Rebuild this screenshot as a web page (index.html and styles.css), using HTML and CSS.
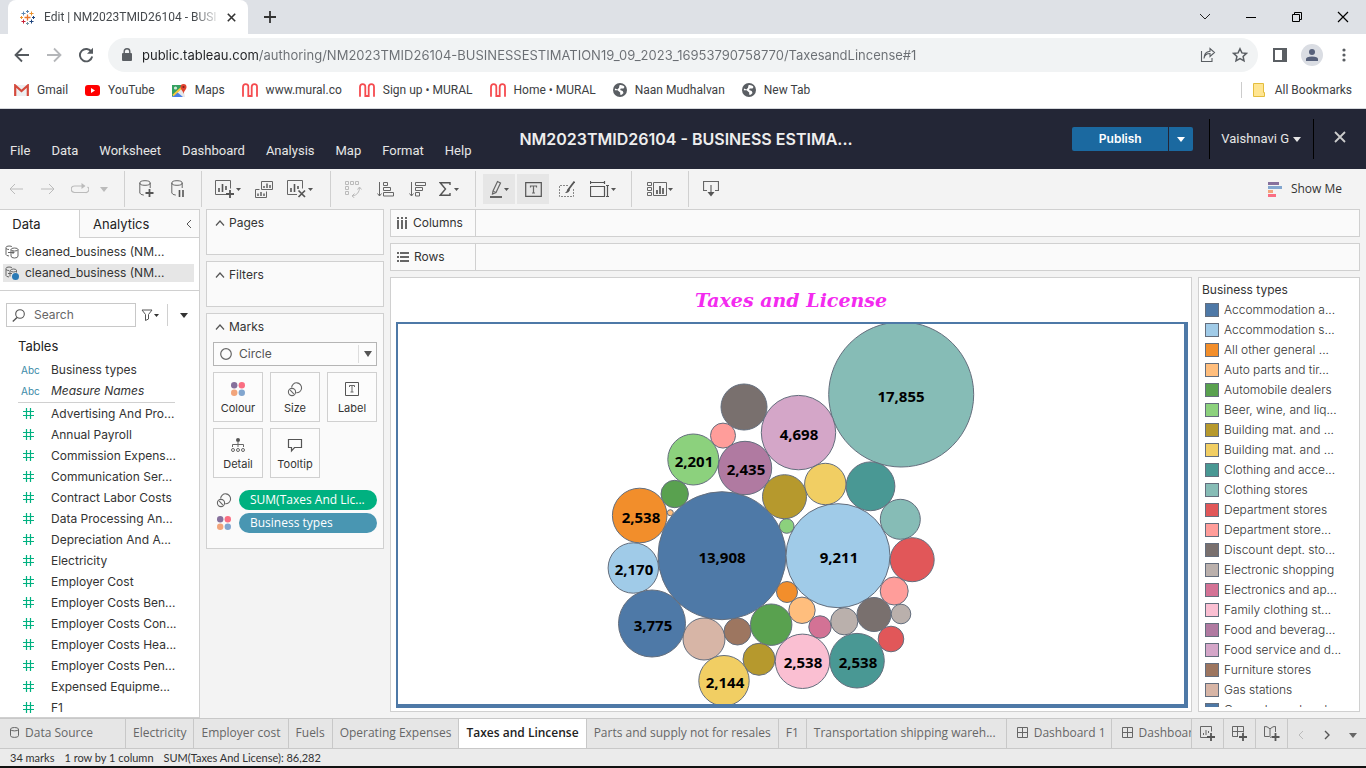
FILE: index.html
```html
<!DOCTYPE html>
<html lang="en">
<head>
<meta charset="utf-8">
<title>Edit | NM2023TMID26104 - BUSINESS ESTIMATION</title>
<link rel="stylesheet" href="styles.css">
</head>
<body>
<svg class="sprite" aria-hidden="true">
  <symbol id="hash" viewBox="0 0 11 11"><path d="M3.5 0v11M7.5 0v11M0 3.5h11M0 7.5h11" fill="none" stroke="#00b180" stroke-width="1.2"/></symbol>
  <symbol id="caret" viewBox="0 0 8 5"><path d="M0 0h8L4 5z" fill="currentColor"/></symbol>
  <symbol id="caret-s" viewBox="0 0 5 3"><path d="M0 0h5L2.5 3z" fill="currentColor"/></symbol>
  <symbol id="chev-up" viewBox="0 0 10 6"><path d="M1 5.5l4-4.5 4 4.5" fill="none" stroke="#555" stroke-width="1.2"/></symbol>
  <symbol id="size" viewBox="0 0 16 16"><g fill="none" stroke="#666" stroke-width="1.1"><path d="M4.600 6.500a5 5 0 1 1 4.600 5.300"/><circle cx="5" cy="11" r="3.600"/><path d="M3.200 9.200l3.600 3.600"/></g></symbol>
  <symbol id="colour" viewBox="0 0 14 14"><circle cx="3.2" cy="3.2" r="3.2" fill="#86709c"/><circle cx="10.8" cy="3.2" r="3.2" fill="#fa6e82"/><circle cx="3.2" cy="10.8" r="3.2" fill="#f2a57c"/><circle cx="10.8" cy="10.8" r="3.2" fill="#82a6cf"/></symbol>
  <symbol id="mural" viewBox="0 0 16 14"><path d="M1 13.800V4Q1 1.100 3.700 1.100T6.300 4v9h3.400V4q0-2.900 2.700-2.900T15 4v9.800" fill="none" stroke="#f54b4f" stroke-width="1.800"/></symbol>
  <symbol id="globe" viewBox="0 0 14 14"><circle cx="7" cy="7" r="7" fill="#5a5e63"/><path d="M6.500 2.200c1.800-.5 3.800.2 5 1.800l-1 1.600-2.800-.2-.6 1.600 2.600 1 .8 2-1.700 1.800H7.200V9.500L4.600 7.200H1.800L2 5.600l2.400.8L6 4.800z" fill="#fff"/></symbol>
  <symbol id="dash" viewBox="0 0 11 11"><path d="M.5.5h10v10H.5zM.5 5.500h10M5.500.5v10" fill="none" stroke="#666"/></symbol>
</svg>

<header class="browser">
  <div class="tabstrip">
    <div class="tab">
      <svg width="15" height="15" viewBox="0 0 15 15" fill="none"><path d="M7.500 4.500v6M4.500 7.500h6" stroke="#e8762d" stroke-width="1.300"/><path d="M3.500 1.500v4M1.500 3.500h4M7.500 0v3M6 1.500h3" stroke="#5c87b2"/><path d="M11.500 1.500v4M9.500 3.500h4M1.500 6v3M0 7.500h3" stroke="#eb912c"/><path d="M13.500 6v3M12 7.500h3M11.500 9.500v4M9.500 11.500h4" stroke="#1f457e"/><path d="M3.500 9.500v4M1.500 11.500h4" stroke="#c72035"/><path d="M7.500 12v3M6 13.500h3" stroke="#7199a6"/></svg>
      <span class="tab-title">Edit | NM2023TMID26104 - BUSI</span>
      <button class="plain" aria-label="Close tab"><svg width="9" height="9" viewBox="0 0 9 9"><path d="M.8.8l7.400 7.400M8.200.8L.8 8.200" stroke="#333" stroke-width="1.600"/></svg></button>
    </div>
    <button class="plain new-tab" aria-label="New tab"><svg width="12" height="12" viewBox="0 0 12 12"><path d="M6 0v12M0 6h12" stroke="#333" stroke-width="1.800"/></svg></button>
    <div class="window-controls">
      <button class="plain" aria-label="Search tabs"><svg width="12" height="12" viewBox="0 0 12 12"><path d="M1 3l5 5 5-5" fill="none" stroke="#222"/></svg></button>
      <button class="plain" aria-label="Minimize"><svg width="12" height="12" viewBox="0 0 12 12"><path d="M1 6.500h10" stroke="#000"/></svg></button>
      <button class="plain" aria-label="Restore"><svg width="12" height="12" viewBox="0 0 12 12"><path d="M1.500 3.500h7v7h-7zM3.500 3.500v-2h7v7h-2" fill="none" stroke="#000"/></svg></button>
      <button class="plain" aria-label="Close"><svg width="12" height="12" viewBox="0 0 12 12"><path d="M1 1l10 10M11 1L1 11" stroke="#000" stroke-width="1.200"/></svg></button>
    </div>
  </div>

  <div class="navbar">
    <button class="plain" aria-label="Back"><svg width="16" height="16" viewBox="0 0 16 16"><path d="M15 8H2M8 1.500L1.500 8 8 14.500" fill="none" stroke="#555a5f" stroke-width="1.800"/></svg></button>
    <button class="plain" aria-label="Forward"><svg width="16" height="16" viewBox="0 0 16 16"><path d="M1 8h13M8 1.500L14.500 8 8 14.500" fill="none" stroke="#b5b7ba" stroke-width="1.800"/></svg></button>
    <button class="plain" aria-label="Reload"><svg width="16" height="16" viewBox="0 0 16 16"><path d="M13.500 5A6.200 6.200 0 1 0 14.200 9.500" fill="none" stroke="#555a5f" stroke-width="1.900"/><path d="M15 .8v6H9z" fill="#555a5f"/></svg></button>
    <div class="address">
      <svg width="10" height="14" viewBox="0 0 10 14"><path d="M1 5h8a1 1 0 0 1 1 1v6a1 1 0 0 1-1 1H1a1 1 0 0 1-1-1V6a1 1 0 0 1 1-1z" fill="#5a5e63"/><path d="M2.200 6V3.500a2.800 2.800 0 0 1 5.600 0V6" fill="none" stroke="#5a5e63" stroke-width="1.400"/></svg>
      <input class="url" type="text" aria-label="Address" value="public.tableau.com/authoring/NM2023TMID26104-BUSINESSESTIMATION19_09_2023_16953790758770/TaxesandLincense#1">
      <button class="plain" aria-label="Share"><svg width="16" height="16" viewBox="0 0 16 16"><path d="M1.500 4v10.500H12V11M4 11.500c.5-3.500 2.500-5 6-5V9.500l4.500-4-4.500-4v2.800C6 4.800 4 7 4 11.500z" fill="none" stroke="#5a5e63" stroke-width="1.100"/></svg></button>
      <button class="plain" aria-label="Bookmark this page"><svg width="16" height="16" viewBox="0 0 16 16"><path d="M8 1.800l1.900 4.100 4.500.5-3.300 3 .9 4.400L8 11.600l-4 2.200.9-4.400-3.300-3 4.500-.5z" fill="none" stroke="#5a5e63" stroke-width="1.500"/></svg></button>
    </div>
    <div class="nav-right">
      <button class="plain" aria-label="Side panel"><svg width="14" height="14" viewBox="0 0 14 14"><path d="M1 1h12v12H1z" fill="none" stroke="#5a5e63" stroke-width="2"/><path d="M9 0h5v14H9z" fill="#5a5e63"/></svg></button>
      <button class="plain" aria-label="Profile"><svg width="22" height="22" viewBox="0 0 22 22"><circle cx="11" cy="11" r="11" fill="#dadde3"/><circle cx="11" cy="8" r="3" fill="#56607a"/><path d="M5 17v-2q0-2.600 6-2.600t6 2.600v2z" fill="#56607a"/></svg></button>
      <button class="plain" aria-label="Menu"><svg width="4" height="14" viewBox="0 0 4 14" fill="#5a5e63"><circle cx="2" cy="2" r="1.600"/><circle cx="2" cy="7" r="1.600"/><circle cx="2" cy="12" r="1.600"/></svg></button>
    </div>
  </div>

  <nav class="bookmarks">
    <a href="#"><svg width="15" height="12" viewBox="0 0 15 12"><path d="M0 1h15v11H0z" fill="#eceff1"/><path d="M1.200 12V1.500l6.300 5.500 6.300-5.500V12" fill="none" stroke="#d54b3d" stroke-width="2.200"/></svg>Gmail</a>
    <a href="#"><svg width="15" height="11" viewBox="0 0 15 11"><rect width="15" height="11" rx="3" fill="#f00"/><path d="M6 3l4 2.500L6 8z" fill="#fff"/></svg>YouTube</a>
    <a href="#"><svg width="15" height="15" viewBox="0 0 15 15"><path d="M0 2h12v12H0z" fill="#34a060"/><path d="M0 14L11 4l2 10z" fill="#e6e8ea"/><path d="M0 14l5-5 6 5z" fill="#4a80e8"/><path d="M1 12.500L11.500 3" stroke="#f8c93a" stroke-width="1.800"/><circle cx="3.500" cy="5" r="1.600" fill="#cfe8d8"/><path d="M11.500 11C11 7.500 8.500 7 8.500 4a3 3 0 0 1 6 0c0 3-2.500 3.500-3 7z" fill="#e0432f"/><circle cx="11.500" cy="4" r="1.100" fill="#7b231a"/></svg>Maps</a>
    <a href="#"><svg width="16" height="14"><use href="#mural"/></svg>www.mural.co</a>
    <a href="#"><svg width="16" height="14"><use href="#mural"/></svg>Sign up • MURAL</a>
    <a href="#"><svg width="16" height="14"><use href="#mural"/></svg>Home • MURAL</a>
    <a href="#"><svg width="14" height="14"><use href="#globe"/></svg>Naan Mudhalvan</a>
    <a href="#"><svg width="14" height="14"><use href="#globe"/></svg>New Tab</a>
    <a href="#" class="all"><svg width="12" height="14" viewBox="0 0 12 14"><path d="M.5.500h10v9h1v4H.5z" fill="#ffe591" stroke="#e3bd3e"/></svg>All Bookmarks</a>
  </nav>
</header>

<div class="app-header">
  <nav class="menu">
    <button class="plain">File</button><button class="plain">Data</button><button class="plain">Worksheet</button><button class="plain">Dashboard</button><button class="plain">Analysis</button><button class="plain">Map</button><button class="plain">Format</button><button class="plain">Help</button>
  </nav>
  <h1>NM2023TMID26104 - BUSINESS ESTIMA...</h1>
  <div class="account">
    <div class="publish"><button>Publish</button><button aria-label="Publish options"><svg width="8" height="5"><use href="#caret"/></svg></button></div>
    <button class="plain user">Vaishnavi G<svg width="8" height="5"><use href="#caret"/></svg></button>
    <button class="plain close" aria-label="Close workbook"><svg width="12" height="12" viewBox="0 0 12 12"><path d="M1 1l10 10M11 1L1 11" stroke="#ccc" stroke-width="1.800"/></svg></button>
  </div>
</div>

<div class="toolbar">
  <div class="group g1">
    <button class="plain" aria-label="Undo"><svg width="14" height="12" viewBox="0 0 14 12"><path d="M14 6H1M6 1L1 6l5 5" fill="none" stroke="#bbb"/></svg></button>
    <button class="plain" aria-label="Redo"><svg width="14" height="12" viewBox="0 0 14 12"><path d="M0 6h13M8 1l5 5-5 5" fill="none" stroke="#bbb"/></svg></button>
    <button class="plain" aria-label="Replay"><svg width="18" height="12" viewBox="0 0 18 12"><path d="M13 3h-9.500a3 3 0 0 0 0 6.500h11a3 3 0 0 0 2-5.500" fill="none" stroke="#bbb" stroke-width="1.200"/><path d="M10.500 0v6l4-3z" fill="#bbb"/></svg></button>
    <button class="plain narrow dim" aria-label="Replay options"><svg width="8" height="5"><use href="#caret"/></svg></button>
  </div>
  <div class="group g2">
    <button class="plain" aria-label="New data source"><svg width="15" height="18" viewBox="0 0 15 18"><g fill="none" stroke="#666"><ellipse cx="6" cy="3" rx="5.200" ry="2.300"/><path d="M.8 3v10q.5 1.800 4 2.100M11.200 3v5"/></g><path d="M10.500 9v8M6.500 13h8" stroke="#555" stroke-width="1.800"/></svg></button>
    <button class="plain" aria-label="Pause updates"><svg width="15" height="18" viewBox="0 0 15 18"><g fill="none" stroke="#666"><ellipse cx="6" cy="3" rx="5.200" ry="2.300"/><path d="M.8 3v10q.5 1.800 4 2.100M11.200 3v5"/></g><path d="M8.500 10v7M12 10v7" stroke="#555" stroke-width="1.600"/></svg></button>
  </div>
  <div class="group g3">
    <button class="plain wide" aria-label="New worksheet"><svg width="20" height="18" viewBox="0 0 20 18"><path d="M11 14.500H.5V.5h15v8" fill="none" stroke="#666"/><path d="M4 12V8M7.500 12V4M11 10V6" stroke="#555" stroke-width="1.600"/><path d="M15 10v8M11 14h8" stroke="#555" stroke-width="1.800"/></svg><svg width="5" height="3"><use href="#caret-s"/></svg></button>
    <button class="plain wide" aria-label="Duplicate"><svg width="18" height="17" viewBox="0 0 18 17"><path d="M6.500.5h11v8h-11zM4.500 8.500h-4v8h11v-6" fill="none" stroke="#666"/><path d="M9 7V5M12 7V2.500M15 7V4M3 15v-2.500M6 15v-4M9 15v-2.500" stroke="#555" stroke-width="1.400"/></svg></button>
    <button class="plain wide" aria-label="Clear sheet"><svg width="20" height="18" viewBox="0 0 20 18"><path d="M10 14.500H.5V.5h15v8" fill="none" stroke="#666"/><path d="M4 12V8M7.500 12V4M11 9V6" stroke="#555" stroke-width="1.600"/><path d="M11.500 10.500l6.500 6.500M18 10.500L11.500 17" stroke="#555" stroke-width="1.700"/></svg><svg width="5" height="3"><use href="#caret-s"/></svg></button>
  </div>
  <div class="group g4">
    <button class="plain" aria-label="Swap"><svg width="17" height="17" viewBox="0 0 17 17" fill="none" stroke="#bbb"><path d="M.5.5h3v3h-3zM5.500.5h3v3h-3zM10.500.5h3v3h-3zM.5 5.500h3v3h-3zM.5 10.500h3v3h-3zM14.500 6.500q0 7-7 8.500M12.500 8.500l2-2.500 2 2.500M9.500 12.500L7 15l2.500 2"/></svg></button>
    <button class="plain" aria-label="Sort ascending"><svg width="17" height="15" viewBox="0 0 17 15" fill="none" stroke="#666"><path d="M2.500 0v14M.5 11.500l2 2.500 2-2.500M6.500.5h4v3h-4zM6.500 5.500h7v3h-7zM6.500 10.500h10v3.500h-10z"/></svg></button>
    <button class="plain" aria-label="Sort descending"><svg width="17" height="15" viewBox="0 0 17 15" fill="none" stroke="#666"><path d="M2.500 0v14M.5 11.500l2 2.500 2-2.500M6.500.5h10v3h-10zM6.500 5.500h7v3h-7zM6.500 10.500h4v3.500h-4z"/></svg></button>
    <button class="plain sum" aria-label="Totals"><svg width="12" height="14" viewBox="0 0 12 14"><path d="M11 3V.8H1.200L6.500 7l-5.300 6.200H11V11" fill="none" stroke="#555" stroke-width="1.400"/></svg><svg width="5" height="3"><use href="#caret-s"/></svg></button>
  </div>
  <div class="group g5">
    <button class="plain on" aria-label="Highlight"><svg width="13" height="18" viewBox="0 0 13 18"><path d="M3 11L7.500 1.500l3 1.500L6 12.500l-3.500 1.500z" fill="none" stroke="#666" stroke-width="1.200"/><path d="M3 11l3 1.500" stroke="#666"/><path d="M0 17h12" stroke="#555" stroke-width="1.800"/></svg><svg width="5" height="3"><use href="#caret-s"/></svg></button>
    <button class="plain on" aria-label="Show mark labels"><svg width="17" height="15" viewBox="0 0 17 15"><path d="M.7.7h15.600v13.600H.7z" fill="none" stroke="#555" stroke-width="1.200"/><path d="M5.500 5.500V4h6v1.500M8.500 4v7M7 11h3" fill="none" stroke="#666" stroke-width="1.200"/></svg></button>
    <button class="plain" aria-label="Format"><svg width="16" height="17" viewBox="0 0 16 17"><path d="M9 4.500H.5v11h14V8" fill="none" stroke="#888" stroke-dasharray="2 1"/><path d="M15.500.5L9 9" stroke="#555" stroke-width="1.800"/><path d="M10 7.500q-2 .5-2.500 3L6 12q3.500.5 5-3z" fill="#555"/></svg></button>
    <button class="plain wide" aria-label="Fit"><svg width="20" height="17" viewBox="0 0 20 17"><path d="M.5 5.500h14v10H.5zM.5 0v3M14.500 0v3M.5 1.500h14M17.500 4.500v11M16 4.500h3M16 15.500h3" fill="none" stroke="#555" stroke-width="1.200"/></svg><svg width="5" height="3"><use href="#caret-s"/></svg></button>
  </div>
  <div class="group g6">
    <button class="plain" aria-label="Show or hide cards"><svg width="20" height="14" viewBox="0 0 20 14"><path d="M.5.5h4v3h-4zM.5 5.500h4v3h-4zM.5 10.500h4v3h-4zM6.500.5h13v13h-13z" fill="none" stroke="#666"/><path d="M10 12V8M13 12V4M16 12V6" stroke="#555" stroke-width="1.700"/></svg><svg width="5" height="3"><use href="#caret-s"/></svg></button>
  </div>
  <div class="group g7">
    <button class="plain" aria-label="Download"><svg width="16" height="16" viewBox="0 0 16 16"><path d="M4 9.500H.5v-9h15v9H12M8 4v10" fill="none" stroke="#666" stroke-width="1.200"/><path d="M4.500 11h7L8 15.500z" fill="#555"/></svg></button>
  </div>
  <button class="plain show-me"><svg width="14" height="15" viewBox="0 0 14 15"><path d="M0 0h11v3H0z" fill="#86709c"/><path d="M0 4h14v3H0z" fill="#82a6cf"/><path d="M0 8h5v3H0z" fill="#f2a57c"/><path d="M0 12h8v3H0z" fill="#fa6e82"/></svg>Show Me</button>
</div>

<main class="workspace">
  <aside class="data-pane">
    <div class="pane-tabs">
      <button class="plain current">Data</button>
      <button class="plain other">Analytics<svg width="6" height="10" viewBox="0 0 6 10"><path d="M5 1L1 5l4 4" fill="none" stroke="#555"/></svg></button>
    </div>
    <div class="sources">
      <a href="#"><svg width="14" height="14" viewBox="0 0 14 14" fill="none" stroke="#666"><path d="M4 11q-3-.5-3-1.500v-7Q1 1 4 1t3 1M1 3.500q1 1 3 1"/><ellipse cx="9.500" cy="4.500" rx="3.500" ry="1.500"/><path d="M6 4.500v6.500q0 2 3.500 2t3.500-2V4.500M3 7.500h6M7.500 6L9 7.500 7.500 9"/></svg>cleaned_business (NM...</a>
      <a href="#" class="selected"><svg width="14" height="14" viewBox="0 0 14 14" fill="none" stroke="#666"><path d="M4 11q-3-.5-3-1.500v-7Q1 1 4 1t3 1M1 3.500q1 1 3 1"/><ellipse cx="8.500" cy="4.500" rx="3" ry="1.500"/><path d="M5 4.500v6M11.500 4.500v2M3 7.500h4"/><circle cx="10.500" cy="10.500" r="3.500" fill="#2a7ab5" stroke="none"/></svg>cleaned_business (NM...</a>
    </div>
    <div class="search-row">
      <label class="search"><svg width="13" height="13" viewBox="0 0 13 13"><circle cx="8" cy="5" r="4.300" fill="none" stroke="#555" stroke-width="1.100"/><path d="M5 8.500L.8 12.500" stroke="#555" stroke-width="1.400"/></svg><input type="text" placeholder="Search" aria-label="Search"></label>
      <button class="plain filter" aria-label="Filter"><svg width="12" height="12" viewBox="0 0 12 12"><path d="M1 1h10L7.500 5.500V10l-3 1.500v-6z" fill="none" stroke="#555"/></svg><svg width="5" height="3"><use href="#caret-s"/></svg></button>
      <button class="plain more" aria-label="More"><svg width="8" height="5"><use href="#caret"/></svg></button>
    </div>
    <h2>Tables</h2>
    <ul class="fields dims">
      <li><span class="abc">Abc</span>Business types</li>
      <li class="italic"><span class="abc">Abc</span>Measure Names</li>
    </ul>
    <ul class="fields measures">
      <li><svg><use href="#hash"/></svg>Advertising And Pro...</li>
      <li><svg><use href="#hash"/></svg>Annual Payroll</li>
      <li><svg><use href="#hash"/></svg>Commission Expens...</li>
      <li><svg><use href="#hash"/></svg>Communication Ser...</li>
      <li><svg><use href="#hash"/></svg>Contract Labor Costs</li>
      <li><svg><use href="#hash"/></svg>Data Processing An...</li>
      <li><svg><use href="#hash"/></svg>Depreciation And A...</li>
      <li><svg><use href="#hash"/></svg>Electricity</li>
      <li><svg><use href="#hash"/></svg>Employer Cost</li>
      <li><svg><use href="#hash"/></svg>Employer Costs Ben...</li>
      <li><svg><use href="#hash"/></svg>Employer Costs Con...</li>
      <li><svg><use href="#hash"/></svg>Employer Costs Hea...</li>
      <li><svg><use href="#hash"/></svg>Employer Costs Pen...</li>
      <li><svg><use href="#hash"/></svg>Expensed Equipme...</li>
      <li><svg><use href="#hash"/></svg>F1</li>
    </ul>
  </aside>

  <section class="cards">
    <div class="card"><h3><svg width="10" height="6"><use href="#chev-up"/></svg>Pages</h3></div>
    <div class="card"><h3><svg width="10" height="6"><use href="#chev-up"/></svg>Filters</h3></div>
    <div class="card marks">
      <h3><svg width="10" height="6"><use href="#chev-up"/></svg>Marks</h3>
      <div class="mark-type">
        <svg width="12" height="12" viewBox="0 0 12 12"><circle cx="6" cy="6" r="5.300" fill="none" stroke="#666" stroke-width="1.200"/></svg>
        <select aria-label="Mark type"><option>Circle</option></select>
        <span class="drop"><svg width="8" height="6" viewBox="0 0 8 6"><path d="M0 0h8L4 6z" fill="#555"/></svg></span>
      </div>
      <div class="mark-buttons">
        <button><svg width="16" height="16" viewBox="0 0 16 16"><use href="#colour" x="1" y="1" width="14" height="14"/></svg>Colour</button>
        <button><svg width="16" height="16"><use href="#size"/></svg>Size</button>
        <button><svg width="16" height="16" viewBox="0 0 16 16"><path d="M1.500 1.500h13v13h-13z" fill="none" stroke="#555"/><path d="M5.500 6V4.500h5V6M8 4.500V11M6.500 11h3" fill="none" stroke="#666"/></svg>Label</button>
        <button><svg width="16" height="16" viewBox="0 0 16 16"><circle cx="8" cy="3" r="2" fill="#555"/><path d="M8 5v5M2.500 10V7.500h11V10" fill="none" stroke="#666"/><g fill="none" stroke="#666"><circle cx="3" cy="13" r="1.500"/><circle cx="8" cy="13" r="1.500"/><circle cx="13" cy="13" r="1.500"/></g></svg>Detail</button>
        <button><svg width="16" height="16" viewBox="0 0 16 16"><path d="M1.500 2.500h13v8H7.500l-3 3.500v-3.500h-3z" fill="none" stroke="#555" stroke-width="1.200"/></svg>Tooltip</button>
      </div>
      <div class="pill-row"><svg width="16" height="16"><use href="#size"/></svg><button class="pill green">SUM(Taxes And Lic...</button></div>
      <div class="pill-row"><svg width="14" height="14"><use href="#colour"/></svg><button class="pill blue">Business types</button></div>
    </div>
  </section>

  <section class="sheet">
    <div class="shelf"><span><svg width="11" height="12" viewBox="0 0 11 12" fill="#666"><path d="M0 0h2v2H0zM4 0h2v2H4zM8 0h2v2H8zM0 3h2v9H0zM4 3h2v9H4zM8 3h2v9H8z"/></svg>Columns</span></div>
    <div class="shelf"><span><svg width="12" height="10" viewBox="0 0 12 10" fill="#666"><path d="M0 0h2v2H0zM0 4h2v2H0zM0 8h2v2H0zM3 0h9v2H3zM3 4h9v2H3zM3 8h9v2H3z"/></svg>Rows</span></div>
    <div class="view-row">
      <div class="view">
        <h2>Taxes and License</h2>
        <div class="viz">
          <svg viewBox="0 0 786 380" role="img" aria-label="Packed bubbles of taxes and license by business type">
            <g stroke="#646e7d" stroke-width="1">
              <circle cx="503.200" cy="70.500" r="72.500" fill="#86bcb6"/><circle cx="324" cy="231.700" r="64" fill="#4e79a7"/><circle cx="440" cy="231.700" r="52" fill="#a0cbe8"/>
              <circle cx="400.500" cy="108.600" r="37.200" fill="#d4a6c8"/><circle cx="346" cy="83" r="23" fill="#79706e"/><circle cx="325" cy="111.600" r="12.500" fill="#ff9d9a"/>
              <circle cx="295.300" cy="135.500" r="25.500" fill="#8cd17d"/><circle cx="347" cy="144" r="26.700" fill="#b07aa1"/><circle cx="276.700" cy="170" r="13.700" fill="#59a14f"/>
              <circle cx="241.700" cy="191.500" r="27.300" fill="#f28e2b"/><circle cx="272.300" cy="188.700" r="3" fill="#ffbe7d"/><circle cx="235.300" cy="244" r="25.200" fill="#a0cbe8"/>
              <circle cx="254" cy="299.500" r="33.500" fill="#4e79a7"/><circle cx="306" cy="315" r="21" fill="#d7b5a6"/><circle cx="339.500" cy="307.500" r="13.500" fill="#9d7660"/>
              <circle cx="373.200" cy="300.700" r="20.700" fill="#59a14f"/><circle cx="326" cy="356.700" r="25.200" fill="#f1ce63"/><circle cx="361" cy="335.300" r="16" fill="#b6992d"/>
              <circle cx="404.500" cy="337.300" r="27.200" fill="#fabfd2"/><circle cx="459" cy="336.700" r="27.300" fill="#499894"/><circle cx="389" cy="268" r="10.500" fill="#f28e2b"/>
              <circle cx="404" cy="286.300" r="13.200" fill="#ffbe7d"/><circle cx="422" cy="303" r="11.200" fill="#d37295"/><circle cx="446.300" cy="297.300" r="13.600" fill="#bab0ac"/>
              <circle cx="476" cy="290.500" r="17" fill="#79706e"/><circle cx="503" cy="290" r="9.800" fill="#bab0ac"/><circle cx="493" cy="315" r="12.800" fill="#e15759"/>
              <circle cx="496.200" cy="267" r="14" fill="#ff9d9a"/><circle cx="514.200" cy="235.700" r="22" fill="#e15759"/><circle cx="502.300" cy="195.300" r="20" fill="#86bcb6"/>
              <circle cx="472.500" cy="162.300" r="24.400" fill="#499894"/><circle cx="427.300" cy="160" r="20.700" fill="#f1ce63"/><circle cx="386.500" cy="172.700" r="22" fill="#b6992d"/>
              <circle cx="388.700" cy="202" r="7.300" fill="#8cd17d"/>
            </g>
            <g class="values">
              <text x="503" y="78">17,855</text><text x="324" y="239">13,908</text><text x="441" y="239">9,211</text><text x="401" y="116">4,698</text>
              <text x="296" y="143">2,201</text><text x="348" y="151">2,435</text><text x="243" y="199">2,538</text><text x="236" y="251">2,170</text>
              <text x="255" y="307">3,775</text><text x="327" y="364">2,144</text><text x="405" y="344">2,538</text><text x="460" y="344">2,538</text>
            </g>
          </svg>
        </div>
      </div>
      <aside class="legend">
        <h3>Business types</h3>
        <ul>
          <li><i class="c1"></i>Accommodation a...</li>
          <li><i class="c2"></i>Accommodation s...</li>
          <li><i class="c3"></i>All other general ...</li>
          <li><i class="c4"></i>Auto parts and tir...</li>
          <li><i class="c5"></i>Automobile dealers</li>
          <li><i class="c6"></i>Beer, wine, and liq...</li>
          <li><i class="c7"></i>Building mat. and ...</li>
          <li><i class="c8"></i>Building mat. and ...</li>
          <li><i class="c9"></i>Clothing and acce...</li>
          <li><i class="c10"></i>Clothing stores</li>
          <li><i class="c11"></i>Department stores</li>
          <li><i class="c12"></i>Department store...</li>
          <li><i class="c13"></i>Discount dept. sto...</li>
          <li><i class="c14"></i>Electronic shopping</li>
          <li><i class="c15"></i>Electronics and ap...</li>
          <li><i class="c16"></i>Family clothing st...</li>
          <li><i class="c17"></i>Food and beverag...</li>
          <li><i class="c18"></i>Food service and d...</li>
          <li><i class="c19"></i>Furniture stores</li>
          <li><i class="c20"></i>Gas stations</li>
          <li><i class="c1"></i>General merchand...</li>
        </ul>
      </aside>
    </div>
  </section>
</main>

<footer>
  <div class="sheet-tabs">
    <div class="tab-list">
      <button class="source"><svg width="9" height="11" viewBox="0 0 9 11"><g fill="none" stroke="#666"><ellipse cx="4.500" cy="2.200" rx="4" ry="1.700"/><path d="M.5 2.200v6.500q0 1.700 4 1.700t4-1.700V2.200"/></g></svg>Data Source</button>
      <button>Electricity</button>
      <button>Employer cost</button>
      <button>Fuels</button>
      <button>Operating Expenses</button>
      <button class="active">Taxes and Lincense</button>
      <button>Parts and supply not for resales</button>
      <button>F1</button>
      <button class="ship">Transportation shipping wareh...</button>
      <button class="board"><svg width="11" height="11"><use href="#dash"/></svg>Dashboard 1</button>
      <button class="board"><svg width="11" height="11"><use href="#dash"/></svg>Dashboard 2</button>
    </div>
    <div class="tab-tools">
      <button aria-label="New worksheet"><svg width="16" height="16" viewBox="0 0 16 16"><path d="M7 11.500H.5V.5h11v5" fill="none" stroke="#666"/><path d="M3.500 9V7M6 9V4M8.500 7V5" stroke="#666"/><path d="M11 7v8M7 11h8" stroke="#555" stroke-width="1.800"/></svg></button>
      <button aria-label="New dashboard"><svg width="16" height="16" viewBox="0 0 16 16"><path d="M6 10.500H.5V.5h11v6M.5 5.500h11M5.500.5v10" fill="none" stroke="#666"/><path d="M11 7v8M7 11h8" stroke="#555" stroke-width="1.800"/></svg></button>
      <button aria-label="New story"><svg width="16" height="16" viewBox="0 0 16 16"><path d="M7 11.500L5.500 10.500h-5v-10L3 .8l3 2 3-2 2.500-.3V6M6 3v7" fill="none" stroke="#666"/><path d="M11.500 7v8M7.500 11h8" stroke="#555" stroke-width="1.800"/></svg></button>
    </div>
    <div class="tab-nav">
      <button aria-label="Previous sheets"><svg width="6" height="10" viewBox="0 0 6 10"><path d="M5 1L1 5l4 4" fill="none" stroke="#bbb"/></svg></button>
      <button aria-label="Next sheets"><svg width="6" height="10" viewBox="0 0 6 10"><path d="M1 1l4 4-4 4" fill="none" stroke="#555" stroke-width="1.400"/></svg></button>
      <button aria-label="All sheets"><svg width="8" height="5"><use href="#caret"/></svg></button>
    </div>
  </div>
  <div class="status"><span>34 marks</span><span>1 row by 1 column</span><span>SUM(Taxes And License): 86,282</span></div>
  <div class="taskbar-edge"></div>
</footer>
</body>
</html>
```
FILE: styles.css
```css
* { box-sizing: border-box; }
body { margin: 0; height: 100vh; display: flex; flex-direction: column; overflow: hidden; background: #f3f3f3; color: #333; font: 12px/16px Inter, sans-serif; }
button, input, select { font: inherit; color: inherit; }
.plain { border: 0; padding: 0; background: none; display: flex; align-items: center; justify-content: center; }
h1, h2, h3, ul { margin: 0; padding: 0; list-style: none; font-weight: 400; font-size: 12px; }
a { color: inherit; text-decoration: none; }
svg { flex: none; display: block; }
.sprite { position: absolute; width: 0; height: 0; }

/* browser frame */
.browser { flex: none; background: #fff; border-bottom: 1px solid #d5d8dc; font-family: Roboto, sans-serif; }
.tabstrip { height: 34px; background: #dee1e6; display: flex; align-items: center; }
.tab { align-self: stretch; width: 240px; margin-left: 8px; padding: 0 12px; display: flex; align-items: center; background: #fff; border-radius: 8px 8px 0 0; color: #45494d; }
.tab-title { flex: 1; margin-left: 9px; overflow: hidden; white-space: nowrap; -webkit-mask-image: linear-gradient(90deg, #000 150px, transparent 177px); mask-image: linear-gradient(90deg, #000 150px, transparent 177px); }
.tab .plain { margin-left: 8px; }
.new-tab { margin-left: 16px; }
.window-controls { margin-left: auto; display: flex; }
.window-controls .plain { width: 46px; height: 30px; }
.navbar { height: 42px; display: flex; align-items: center; padding-left: 6px; }
.navbar > .plain { width: 32px; height: 34px; }
.address { flex: 1; height: 34px; margin-left: 6px; padding: 0 10px 0 14px; display: flex; align-items: center; background: #f1f3f4; border-radius: 17px; }
.url { flex: 1; min-width: 0; margin-left: 10px; padding: 0; border: 0; font: 13px/20px Inter, sans-serif; color: transparent; background: linear-gradient(90deg, #202124 117px, #6a6e73 117px); -webkit-background-clip: text; background-clip: text; }
.address .plain { margin-left: 16px; }
.nav-right { display: flex; align-items: center; gap: 14px; padding: 0 20px 0 15px; }
.nav-right .plain:last-child { margin-left: 5px; }
.bookmarks { height: 32px; display: flex; align-items: center; gap: 17px; padding: 0 14px 4px; color: #3c4043; white-space: nowrap; }
.bookmarks a { display: flex; align-items: center; gap: 8px; }
.bookmarks .all { margin-left: auto; padding-left: 11px; border-left: 1px solid #ccc; gap: 10px; }

/* workbook header */
.app-header { flex: none; height: 60px; display: grid; grid-template-columns: 1fr auto 1fr; align-items: center; background: #232636; color: #e6e6e6; }
.menu { align-self: end; display: flex; gap: 21px; padding: 0 0 9px 10px; font: 13px/18px Roboto, sans-serif; }
.menu .plain { font: inherit; }
.app-header h1 { padding-left: 6px; font-size: 16px; font-weight: 600; color: #eee; white-space: nowrap; }
.account { display: flex; justify-content: flex-end; align-items: center; }
.publish { display: flex; gap: 1px; margin-right: 16px; color: #fff; font-weight: 600; }
.publish button { width: 96px; height: 24px; padding: 0; border: 0; background: #1b69a0; border-radius: 2px 0 0 2px; }
.publish button + button { width: 24px; display: grid; place-items: center; border-radius: 0 2px 2px 0; }
.user { height: 40px; padding: 0 12px 0 11px; gap: 4px; border: solid #000; border-width: 0 1px; font: 13px/18px Roboto, sans-serif; }
.close { width: 52px; height: 40px; padding-bottom: 4px; }

/* toolbar */
.toolbar { flex: none; height: 40px; display: flex; align-items: center; color: #555; }
.group { height: 36px; display: flex; align-items: center; border-right: 1px solid #d0d0d0; }
.group .plain { width: 32px; height: 30px; gap: 1px; }
.group .narrow { width: 16px; }
.group .wide { width: 36px; }
.group .sum { gap: 3px; }
.group .on { background: #e6e6e6; }
.dim { color: #bbb; }
.g1 { padding-right: 12px; }
.g2 { padding: 0 7px 0 5px; }
.g3 { padding: 0 12px 0 8px; }
.g4 { padding: 0 10px 0 6px; }
.g5 { padding: 0 10px 0 7px; gap: 2px; }
.g6 { padding: 0 12px; }
.g7 { padding-left: 6px; border: 0; }
.show-me { margin-left: auto; margin-right: 24px; gap: 9px; font: 12px/16px "Open Sans", sans-serif; color: #333; }

/* workspace */
.workspace { flex: 1; min-height: 0; display: flex; gap: 6px; padding-right: 6px; }
.data-pane { width: 200px; flex: none; background: #fff; border: solid #d0d0d0; border-width: 1px 1px 1px 0; overflow: hidden; }
.pane-tabs { display: flex; height: 28px; font: 13px/18px Inter, sans-serif; color: #222; }
.pane-tabs .plain { font: inherit; }
.pane-tabs .current { width: 79px; padding-right: 26px; }
.pane-tabs .other { flex: 1; justify-content: space-between; padding: 0 7px 0 13px; border: solid #d0d0d0; border-width: 0 0 1px 1px; background: #fafafa; }
.sources { padding: 5px 5px 8px 3px; border-bottom: 1px solid #d0d0d0; }
.sources a { display: flex; align-items: center; gap: 6px; height: 18px; padding-left: 2px; margin-bottom: 3px; }
.sources .selected { background: #e6e6e6; margin-bottom: 0; }
.search-row { display: flex; align-items: center; padding: 12px 0 0 6px; height: 36px; }
.search { width: 130px; height: 24px; display: flex; align-items: center; gap: 8px; padding: 0 5px; border: 1px solid #c8c8c8; }
.search input { flex: 1; min-width: 0; padding: 0 0 0 1px; border: 0; background: none; }
.search input::placeholder { color: #666; opacity: 1; }
.filter { width: 32px; gap: 1px; height: 22px; padding-right: 3px; border-right: 1px solid #d0d0d0; }
.more { width: 31px; }
.data-pane h2 { padding: 11px 0 5px 18px; font: 13px/16px Inter, sans-serif; color: #222; }
.fields li { height: 21px; display: grid; grid-template-columns: 30px 1fr; align-items: center; padding-left: 21px; white-space: nowrap; }
.fields svg { width: 11px; height: 11px; margin-left: 2px; }
.abc { font-size: 10px; color: #3b8ba8; }
.italic { font-style: italic; }
.italic .abc { font-style: normal; }
.dims { padding-bottom: 1px; }
.measures::before { content: ""; display: block; margin: 0 24px 0 18px; border-top: 1px solid #d0d0d0; }
.cards { width: 178px; flex: none; display: flex; flex-direction: column; gap: 6px; }
.card { min-height: 46px; padding: 5px 6px; background: #fafafa; border: 1px solid #d0d0d0; }
.card h3 { display: flex; align-items: center; gap: 4px; padding-left: 2px; line-height: 16px; }
.mark-type { display: flex; align-items: center; gap: 2px; height: 24px; margin: 7px 0 6px; padding-left: 6px; border: 1px solid #b5b5b5; background: #fcfcfc; }
.mark-type select { flex: 1; border: 0; padding: 0 5px; background: none; appearance: none; color: #555; }
.drop { width: 18px; height: 18px; display: grid; place-items: center; border-left: 1px solid #ddd; }
.mark-buttons { display: grid; grid-template-columns: repeat(3, 50px); justify-content: space-between; gap: 6px; margin-bottom: 12px; }
.mark-buttons button { height: 50px; padding: 1px 0 0; display: flex; flex-direction: column; align-items: center; justify-content: center; gap: 4px; border: 1px solid #d0d0d0; background: #fcfcfc; font-size: 11px; line-height: 14px; }
.pill-row { display: grid; grid-template-columns: 22px 1fr; gap: 4px; align-items: center; justify-items: center; margin-bottom: 3px; }
.pill { justify-self: stretch; height: 20px; padding: 0 11px; border: 0; border-radius: 10px; color: #fff; text-align: left; white-space: nowrap; font: 12px/20px "Open Sans", sans-serif; }
.green { background: #00b180; }
.blue { background: #4996b2; }
.marks { padding-bottom: 12px; }

.sheet { flex: 1; min-width: 0; display: flex; flex-direction: column; gap: 6px; padding-bottom: 6px; }
.shelf { height: 28px; flex: none; background: #fafafa; border: 1px solid #d0d0d0; display: flex; }
.shelf span { width: 85px; display: flex; align-items: center; gap: 5px; padding-left: 6px; border-right: 1px solid #d0d0d0; }
.view-row { flex: 1; min-height: 0; display: flex; gap: 6px; }
.view { flex: 1; min-width: 0; display: flex; flex-direction: column; padding: 0 3px 3px 5px; background: #fff; border: 1px solid #d0d0d0; }
.view h2 { flex: none; padding-right: 2px; font: italic bold 19px/44px "DejaVu Serif", serif; color: #f32aef; text-align: center; }
.viz { flex: 1; min-height: 0; border: solid #4e79a7; border-width: 2px 4px 4px 2px; }
.viz svg { width: 100%; height: 100%; }
.values { font: bold 15px "Noto Sans", sans-serif; fill: #000; text-anchor: middle; }
.legend { width: 162px; flex: none; padding: 4px 3px; background: #fff; border: 1px solid #d0d0d0; display: flex; flex-direction: column; }
.legend h3 { line-height: 16px; padding-bottom: 2px; }
.legend ul { overflow: hidden; }
.legend li { height: 20px; display: flex; align-items: center; gap: 5px; padding-left: 3px; white-space: nowrap; font-weight: 300; }
.legend i { width: 14px; height: 14px; border: 1px solid #646e7d; }
.c1 { background: #4e79a7; } .c2 { background: #a0cbe8; } .c3 { background: #f28e2b; } .c4 { background: #ffbe7d; }
.c5 { background: #59a14f; } .c6 { background: #8cd17d; } .c7 { background: #b6992d; } .c8 { background: #f1ce63; }
.c9 { background: #499894; } .c10 { background: #86bcb6; } .c11 { background: #e15759; } .c12 { background: #ff9d9a; }
.c13 { background: #79706e; } .c14 { background: #bab0ac; } .c15 { background: #d37295; } .c16 { background: #fabfd2; }
.c17 { background: #b07aa1; } .c18 { background: #d4a6c8; } .c19 { background: #9d7660; } .c20 { background: #d7b5a6; }

/* sheet tabs and status */
footer { flex: none; background: #ebebeb; }
.sheet-tabs { height: 31px; display: flex; background: #e6e6e6; border: solid #c8c8c8; border-width: 1px 0; font-family: "Open Sans", sans-serif; }
.sheet-tabs button { padding: 0 7px 2px; border: 0; border-right: 1px solid #c8c8c8; background: none; color: #666; display: flex; align-items: center; justify-content: center; gap: 6px; white-space: nowrap; flex: none; }
.tab-list { flex: 1; min-width: 0; display: flex; overflow: hidden; }
.sheet-tabs .source { width: 126px; justify-content: flex-start; padding-left: 10px; }
.sheet-tabs .active { background: #fff; color: #222; font-weight: 600; }
.sheet-tabs .ship { padding-right: 10px; }
.sheet-tabs .board { padding: 0 5px 2px 10px; }
.tab-tools { display: flex; border-left: 1px solid #c8c8c8; }
.sheet-tabs .tab-tools button { width: 32px; padding: 0; }
.tab-nav { display: flex; padding: 3px 0 0; }
.sheet-tabs .tab-nav button { width: 26px; padding: 0; border: 0; }
.status { height: 17px; display: flex; gap: 10px; padding-left: 10px; font: 11px/17px Lato, sans-serif; }
.taskbar-edge { height: 2px; background: #111; }
```
